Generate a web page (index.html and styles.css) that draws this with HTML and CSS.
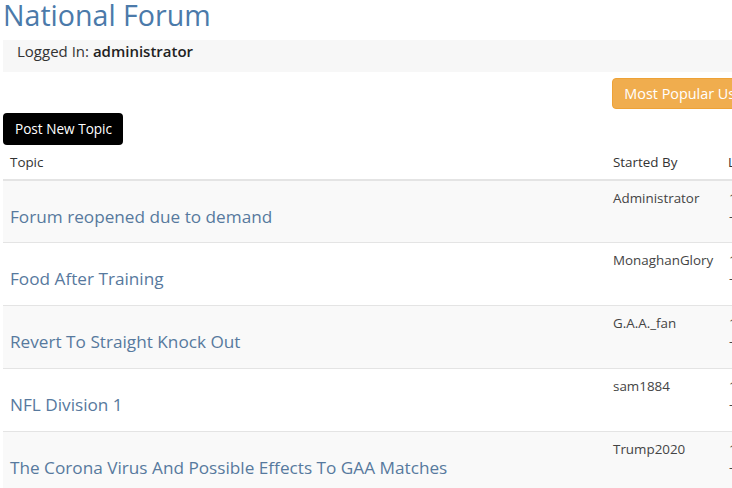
FILE: index.html
```html
<!DOCTYPE html>
<html>
<head>
<meta charset="utf-8">
<link rel="stylesheet" href="styles.css">
</head>
<body>
<div class="page">
  <h1 class="title">National Forum</h1>
  <div class="login-bar">Logged In: <strong>administrator</strong></div>
  <div class="actions">
    <a class="btn btn-warning">Most Popular Users</a>
  </div>
  <div class="actions-left">
    <a class="btn btn-dark">Post New Topic</a>
  </div>
  <table class="topics">
    <colgroup>
      <col class="c-topic">
      <col class="c-start">
      <col class="c-last">
    </colgroup>
    <thead>
      <tr><th>Topic</th><th>Started By</th><th>Last Post</th></tr>
    </thead>
    <tbody>
      <tr class="odd"><td class="t"><a>Forum reopened due to demand</a></td><td>Administrator</td><td>10/03/2020<br>-</td></tr>
      <tr><td class="t"><a>Food After Training</a></td><td>MonaghanGlory</td><td>11/03/2020<br>-</td></tr>
      <tr class="odd"><td class="t"><a>Revert To Straight Knock Out</a></td><td>G.A.A._fan</td><td>12/03/2020<br>-</td></tr>
      <tr><td class="t"><a>NFL Division 1</a></td><td>sam1884</td><td>13/03/2020<br>-</td></tr>
      <tr class="odd"><td class="t"><a>The Corona Virus And Possible Effects To GAA Matches</a></td><td>Trump2020</td><td>14/03/2020<br>-</td></tr>
    </tbody>
  </table>
</div>
</body>
</html>
```
FILE: styles.css
```css
html, body {
  margin: 0;
  padding: 0;
  overflow: hidden;
  background: #fff;
}
body {
  font-family: "Open Sans", "Noto Sans", sans-serif;
  color: #333;
}
.page {
  width: 765px;
  padding-left: 3px;
}
.title {
  margin: 0 0 10px 0;
  font-size: 28.6px;
  line-height: 30px;
  font-weight: 400;
  color: #4b7aaa;
}
.login-bar {
  height: 32px;
  box-sizing: border-box;
  padding: 0 0 0 14px;
  background: #f7f7f7;
  font-size: 15px;
  line-height: 22px;
  color: #333;
}
.login-bar strong {
  font-weight: 600;
  color: #222;
}
.actions {
  display: flex;
  justify-content: flex-end;
  margin-top: 6px;
}
.actions-left {
  display: flex;
  margin-top: 4px;
}
.btn {
  display: inline-block;
  border-radius: 4px;
  color: #fff;
  white-space: nowrap;
  box-sizing: border-box;
}
.btn-warning {
  background: #f0ad4e;
  border: 1px solid #eea236;
  font-size: 14.4px;
  line-height: 29px;
  height: 31px;
  padding: 0 11px;
}
.btn-dark {
  background: #000;
  font-size: 13.6px;
  line-height: 32px;
  height: 32px;
  width: 120px;
  padding: 0 0 0 12px;
}
.topics {
  width: 100%;
  border-collapse: collapse;
  table-layout: fixed;
  font-size: 13.4px;
}
.c-topic { width: 602px; }
.c-start { width: 116px; }
.topics th {
  text-align: left;
  font-weight: 400;
  padding: 8px 7px;
  line-height: 18px;
  border-bottom: 2px solid #e4e4e4;
  white-space: nowrap;
  overflow: hidden;
}
.topics th:nth-child(2), .topics td:nth-child(2) {
  padding-left: 8px;
}
.topics td {
  vertical-align: top;
  padding: 8px 8px;
  line-height: 18px;
  height: 63px;
  box-sizing: border-box;
  border-top: 1px solid #e4e4e4;
  white-space: nowrap;
  overflow: hidden;
  color: #444;
}
.topics tbody tr:first-child td {
  border-top: none;
  height: 62px;
}
.topics tr.odd td {
  background: #f9f9f9;
}
.topics td.t {
  padding: 24px 7px 0 7px;
}
.topics td.t a {
  font-size: 17.2px;
  line-height: 23px;
  color: #57799e;
}
```
